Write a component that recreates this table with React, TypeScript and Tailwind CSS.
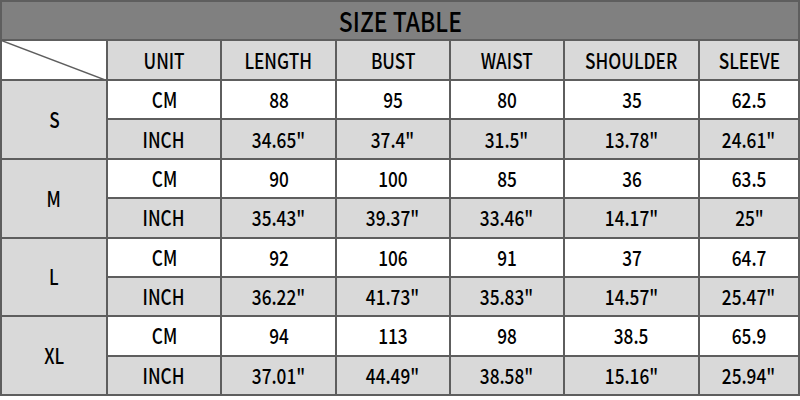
import React from "react";

const headers = ["UNIT", "LENGTH", "BUST", "WAIST", "SHOULDER", "SLEEVE"];

const sizes = [
  { name: "S", cm: ["88", "95", "80", "35", "62.5"], inch: ['34.65"', '37.4"', '31.5"', '13.78"', '24.61"'] },
  { name: "M", cm: ["90", "100", "85", "36", "63.5"], inch: ['35.43"', '39.37"', '33.46"', '14.17"', '25"'] },
  { name: "L", cm: ["92", "106", "91", "37", "64.7"], inch: ['36.22"', '41.73"', '35.83"', '14.57"', '25.47"'] },
  { name: "XL", cm: ["94", "113", "98", "38.5", "65.9"], inch: ['37.01"', '44.49"', '38.58"', '15.16"', '25.94"'] },
];

function Cell({ text, gray }: { text: string; gray?: boolean }) {
  return (
    <div className={`flex items-center justify-center ${gray ? "bg-[#d9d9d9]" : "bg-white"}`}>
      <span className="inline-block scale-x-[0.82]">{text}</span>
    </div>
  );
}

export default function App() {
  return (
    <div
      className="w-[800px] h-[400px] bg-white text-black text-[21px] font-medium"
      style={{ fontFamily: '"Noto Sans CJK SC", "Noto Sans", sans-serif' }}
    >
      <div className="grid grid-cols-[104px_112px_113px_112px_112px_133px_98px] grid-rows-[37px_38px_repeat(8,37.375px)] gap-[2px] p-[2px] bg-[#5e5e5e] leading-none">
        <div className="col-span-7 flex items-center justify-center bg-[#808080] text-[27px]">
          <span className="inline-block scale-x-[0.85]">SIZE TABLE</span>
        </div>

        {/* corner cell with diagonal */}
        <div className="relative bg-white">
          <svg className="absolute -left-[2px] -top-[1px]" width="108" height="41" viewBox="0 0 108 41">
            <line x1="0" y1="0" x2="108" y2="41" stroke="#5e5e5e" strokeWidth="1.5" />
          </svg>
        </div>
        {headers.map((h) => (
          <Cell key={h} text={h} gray />
        ))}

        {sizes.map((s) => (
          <React.Fragment key={s.name}>
            <div className="row-span-2 flex items-center justify-center bg-[#d9d9d9]">
              <span className="inline-block scale-x-[0.82]">{s.name}</span>
            </div>
            <Cell text="CM" />
            {s.cm.map((v, i) => (
              <Cell key={"c" + i} text={v} />
            ))}
            <Cell text="INCH" gray />
            {s.inch.map((v, i) => (
              <Cell key={"i" + i} text={v} gray />
            ))}
          </React.Fragment>
        ))}
      </div>
    </div>
  );
}
